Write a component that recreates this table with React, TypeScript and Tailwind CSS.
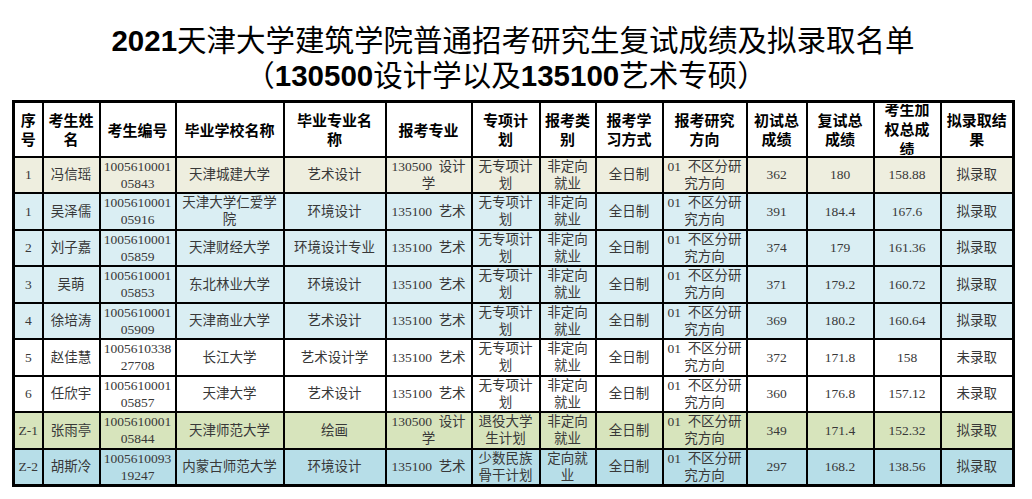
import React from "react";

type Row = {
  bg: string;
  c: React.ReactNode[];
};

const cols = [29, 57, 76, 108, 102, 86, 68, 56, 67, 84, 60, 67, 67, 73];

const headers: React.ReactNode[] = [
  <>序<br />号</>,
  <>考生姓<br />名</>,
  <>考生编号</>,
  <>毕业学校名称</>,
  <>毕业专业名<br />称</>,
  <>报考专业</>,
  <>专项计<br />划</>,
  <>报考类<br />别</>,
  <>报考学<br />习方式</>,
  <>报考研究<br />方向</>,
  <>初试总<br />成绩</>,
  <>复试总<br />成绩</>,
  <>考生加<br />权总成<br />绩</>,
  <>拟录取结<br />果</>,
];

const dir = <>01&nbsp; 不区分研<br />究方向</>;
const fdx = <>非定向<br />就业</>;
const wzx = <>无专项计<br />划</>;
const ys = <>135100&nbsp; 艺术</>;
const sj = <>130500&nbsp; 设计<br />学</>;

const rows: Row[] = [
  { bg: "bg-[#eeeedf]", c: ["1", "冯信瑶", <>1005610001<br />05843</>, "天津城建大学", "艺术设计", sj, wzx, fdx, "全日制", dir, "362", "180", "158.88", "拟录取"] },
  { bg: "bg-[#daeef3]", c: ["1", "吴泽儒", <>1005610001<br />05916</>, <>天津大学仁爱学<br />院</>, "环境设计", ys, wzx, fdx, "全日制", dir, "391", "184.4", "167.6", "拟录取"] },
  { bg: "bg-[#daeef3]", c: ["2", "刘子嘉", <>1005610001<br />05859</>, "天津财经大学", "环境设计专业", ys, wzx, fdx, "全日制", dir, "374", "179", "161.36", "拟录取"] },
  { bg: "bg-[#daeef3]", c: ["3", "吴萌", <>1005610001<br />05853</>, "东北林业大学", "环境设计", ys, wzx, fdx, "全日制", dir, "371", "179.2", "160.72", "拟录取"] },
  { bg: "bg-[#daeef3]", c: ["4", "徐培涛", <>1005610001<br />05909</>, "天津商业大学", "艺术设计", ys, wzx, fdx, "全日制", dir, "369", "180.2", "160.64", "拟录取"] },
  { bg: "bg-white", c: ["5", "赵佳慧", <>1005610338<br />27708</>, "长江大学", "艺术设计学", ys, wzx, fdx, "全日制", dir, "372", "171.8", "158", "未录取"] },
  { bg: "bg-white", c: ["6", "任欣宇", <>1005610001<br />05857</>, "天津大学", "艺术设计", ys, wzx, fdx, "全日制", dir, "360", "176.8", "157.12", "未录取"] },
  { bg: "bg-[#d7e4bc]", c: ["Z-1", "张雨亭", <>1005610001<br />05844</>, "天津师范大学", "绘画", sj, <>退役大学<br />生计划</>, fdx, "全日制", dir, "349", "171.4", "152.32", "拟录取"] },
  { bg: "bg-[#b7dee8]", c: ["Z-2", "胡斯冷", <>1005610093<br />19247</>, "内蒙古师范大学", "环境设计", ys, <>少数民族<br />骨干计划</>, <>定向就<br />业</>, "全日制", dir, "297", "168.2", "138.56", "拟录取"] },
];

export default function App() {
  return (
    <div className="w-[1032px] h-[499px] bg-white overflow-hidden">
      <div className="pt-[23px] text-center text-black text-[29.5px] leading-[35px] font-['Liberation_Sans','Noto_Sans_CJK_SC',sans-serif]">
        <div className="pr-[6px]">
          <span className="font-bold">2021</span>
          <span className="font-normal">天津大学建筑学院普通招考研究生复试成绩及拟录取名单</span>
        </div>
        <div className="pr-[20px]">
          <span>（</span>
          <span className="font-bold">130500</span>
          <span>设计学以及</span>
          <span className="font-bold">135100</span>
          <span>艺术专硕）</span>
        </div>
      </div>
      <div className="pl-[12px] pt-[7px]">
        <table className="table-fixed border-collapse border-[3px] border-black w-[1001px]">
          <colgroup>
            {cols.map((w, i) => (
              <col key={i} style={{ width: w }} />
            ))}
          </colgroup>
          <thead>
            <tr className="h-[55px] bg-white">
              {headers.map((h, i) => (
                <th
                  key={i}
                  className="border-2 border-black p-0 text-center align-middle font-bold text-black text-[15px] leading-[19px] font-['Noto_Sans_CJK_SC','Liberation_Sans',sans-serif]"
                >
                  <div className="max-h-[51px] overflow-hidden flex items-center justify-center">
                    <div className={i === 12 ? "leading-[20px]" : ""}>{h}</div>
                  </div>
                </th>
              ))}
            </tr>
          </thead>
          <tbody>
            {rows.map((r, ri) => (
              <tr key={ri} className={`h-[36.5px] ${r.bg}`}>
                {r.c.map((v, ci) => (
                  <td
                    key={ci}
                    className="border-2 border-black p-0 text-center align-middle text-[#383838] text-[13.5px] leading-[17px] font-['Liberation_Serif','Noto_Sans_CJK_SC',serif]"
                  >
                    {v}
                  </td>
                ))}
              </tr>
            ))}
          </tbody>
        </table>
      </div>
    </div>
  );
}
